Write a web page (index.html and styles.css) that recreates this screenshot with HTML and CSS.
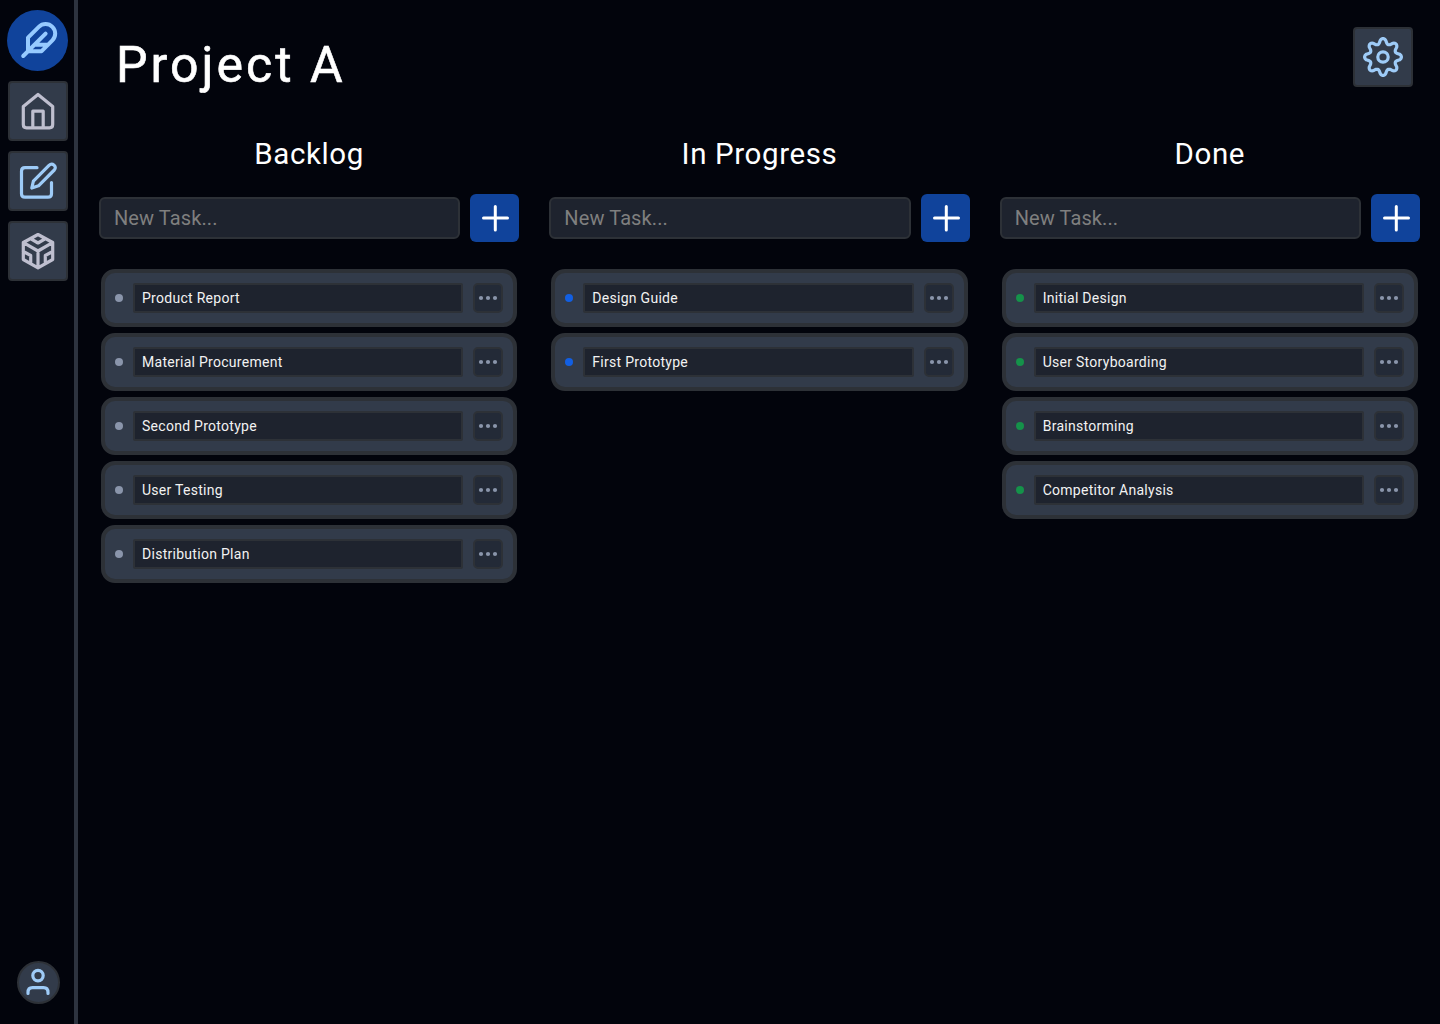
FILE: index.html
```html
<!DOCTYPE html>
<html lang="en">
<head>
<meta charset="utf-8">
<title>Project A</title>
<link rel="stylesheet" href="styles.css">
</head>
<body>
<aside class="sidebar">
  <nav class="nav">
    <a class="logo"><svg viewBox="0 0 61 61"><g transform="translate(13 10.8) scale(1.6)"><path d="M20.240 12.240a6 6 0 0 0-8.490-8.490L5 10.500V19h8.500zM16 8L2 22M17.500 15H9"/></g></svg></a>
    <a class="tile"><svg viewBox="0 0 60 60"><path d="M15.300 25.500L30 13.500L44.700 25.500V43.500Q44.700 46.800 41.500 46.800H18.500Q15.300 46.800 15.300 43.500ZM24.800 46.500V30.200H35.200V46.500"/></svg></a>
    <a class="tile active"><svg viewBox="0 0 60 60"><path d="M29 16.700H17Q13.500 16.700 13.500 20.200V42.700Q13.500 46.200 17 46.200H40Q43.500 46.200 43.500 42.700V31.500M23.800 37L25.400 30.200L41 14.400C44.300 11.200 49.500 15.400 46.300 19L30.500 34.800Z"/></svg></a>
    <a class="tile"><svg viewBox="0 0 60 60"><path d="M30 13.500L44.700 21.500V38.500L30 46.800L15.300 38.500V21.500ZM15.500 21.700L30 30L44.500 21.700M30 30V46.500M22.500 17.700L30 22L37.500 17.700M15.300 30.500L22.700 34.500V42.500M44.700 30.500L37.300 34.500V42.500"/></svg></a>
  </nav>
  <a class="avatar"><svg viewBox="0 0 43 43"><circle cx="21" cy="14.600" r="5.200"/><path d="M11 32.500V31.500Q11 26.700 15.500 26.700H26.500Q31 26.700 31 31.500V32.500"/></svg></a>
</aside>
<main class="main">
  <header class="header">
    <h1 class="title">Project A</h1>
    <a class="tile active"><svg viewBox="0 0 60 60"><circle cx="30" cy="30" r="5.200"/><path id="gear" d=""/></svg></a>
  </header>
  <div class="board" id="board"></div>
</main>
<script src="board.js"></script>
</body>
</html>
```
FILE: styles.css
```css
* { box-sizing: border-box; }
body {
  margin: 0;
  height: 1024px;
  display: flex;
  overflow: hidden;
  background: #02040c;
  color: #fff;
  font-family: Roboto, "Open Sans", sans-serif;
}
svg { display: block; width: 100%; height: 100%; fill: none; stroke: currentColor; stroke-width: 3.2; stroke-linecap: round; stroke-linejoin: round; }
.sidebar {
  width: 78px;
  padding: 10px 0 20px 2px;
  border-right: 4px solid #2d333f;
  display: flex;
  flex-direction: column;
  align-items: center;
  justify-content: space-between;
}
.nav { display: flex; flex-direction: column; align-items: center; gap: 10px; }
.logo { width: 61px; height: 61px; margin-left: -1px; border-radius: 50%; background: #10439b; color: #96caff; }
.logo svg { stroke-width: 2.5; }
.tile { width: 60px; height: 60px; border: 2px solid #2d3137; border-radius: 4px; background: #323b4a; color: #bfbfcf; }
.tile svg { width: 60px; height: 60px; margin: -2px; }
.tile.active { color: #9ecbf7; }
.avatar { width: 43px; height: 43px; border: 2px solid #2d3137; border-radius: 50%; background: #323b4a; color: #9ecbf7; }
.avatar svg { width: 43px; height: 43px; margin: -2px; }
.main { flex: 1; min-width: 0; padding: 27px 20px 0 21px; }
.header { display: flex; justify-content: space-between; padding: 0 7px 0 17px; }
.title { margin: 8px 0 0; font-size: 50px; line-height: 60px; font-weight: 400; letter-spacing: 3px; -webkit-text-stroke: 0.6px #fff; }
.board { display: grid; grid-template-columns: repeat(3, 1fr); gap: 30px; margin-top: 39px; }
.column-title { margin: 0; text-align: center; font-size: 29.5px; line-height: 40px; font-weight: 400; letter-spacing: 0.6px; }
.entry { display: flex; align-items: center; gap: 10px; margin-top: 20px; }
.entry-field { flex: 1; height: 42px; padding: 0 13px; border: 2px solid #2d3137; border-radius: 6px; background: #1e232e; color: #7f7f7f; font-size: 20px; line-height: 38px; letter-spacing: 0.1px; }
.add { width: 49px; height: 48px; border-radius: 6px; background: #10439b; }
.add svg { stroke-width: 3; }
.tasks { margin-top: 27px; padding: 0 2px; display: flex; flex-direction: column; gap: 6px; }
.task { height: 58px; padding: 0 10px; display: flex; align-items: center; border: 4px solid #2d3137; border-radius: 14px; background: #323b4a; }
.dot { width: 8px; height: 8px; border-radius: 50%; background: #8a95ab; }
.in-progress .dot { background: #125fe3; }
.done .dot { background: #15924a; }
.task-name { flex: 1; height: 30px; margin: 0 10px; padding: 0 7px; border: 2px solid #2d3137; border-radius: 2px; background: #1e232e; color: #f2f2f2; font-size: 14px; line-height: 26px; letter-spacing: 0.28px; }
.more { width: 30px; height: 30px; border: 2px solid #2d3137; border-radius: 5px; background: #232a37; }
.more svg { width: 30px; height: 30px; margin: -2px; fill: #8a95ab; stroke: none; }
```
FILE: board.js
```js
const columns = [
  ["backlog", "Backlog", ["Product Report", "Material Procurement", "Second Prototype", "User Testing", "Distribution Plan"]],
  ["in-progress", "In Progress", ["Design Guide", "First Prototype"]],
  ["done", "Done", ["Initial Design", "User Storyboarding", "Brainstorming", "Competitor Analysis"]],
];
const more = '<svg viewBox="0 0 30 30"><circle cx="8" cy="15" r="2.1"/><circle cx="15" cy="15" r="2.1"/><circle cx="22" cy="15" r="2.1"/></svg>';
const task = (name) => `<div class="task"><span class="dot"></span><div class="task-name">${name}</div><a class="more">${more}</a></div>`;
document.getElementById("board").innerHTML = columns.map(([key, title, names]) => `
  <section class="${key}">
    <h2 class="column-title">${title}</h2>
    <div class="entry">
      <div class="entry-field">New Task...</div>
      <a class="add"><svg viewBox="0 0 49 48"><path d="M13.500 24H37.500M25.300 12.500V36"/></svg></a>
    </div>
    <div class="tasks">${names.map(task).join("")}</div>
  </section>`).join("");

// Eight rounded teeth around the hub
let d = "";
for (let i = 0; i <= 160; i++) {
  const a = (i / 160) * Math.PI * 2;
  const w = Math.cos(8 * a);
  const r = 15.900 + 2.500 * Math.sign(w) * Math.pow(Math.abs(w), 0.7);
  d += (i ? "L" : "M") + (30 + r * Math.cos(a)).toFixed(2) + " " + (30 + r * Math.sin(a)).toFixed(2);
}
document.getElementById("gear").setAttribute("d", d + "Z");
```
